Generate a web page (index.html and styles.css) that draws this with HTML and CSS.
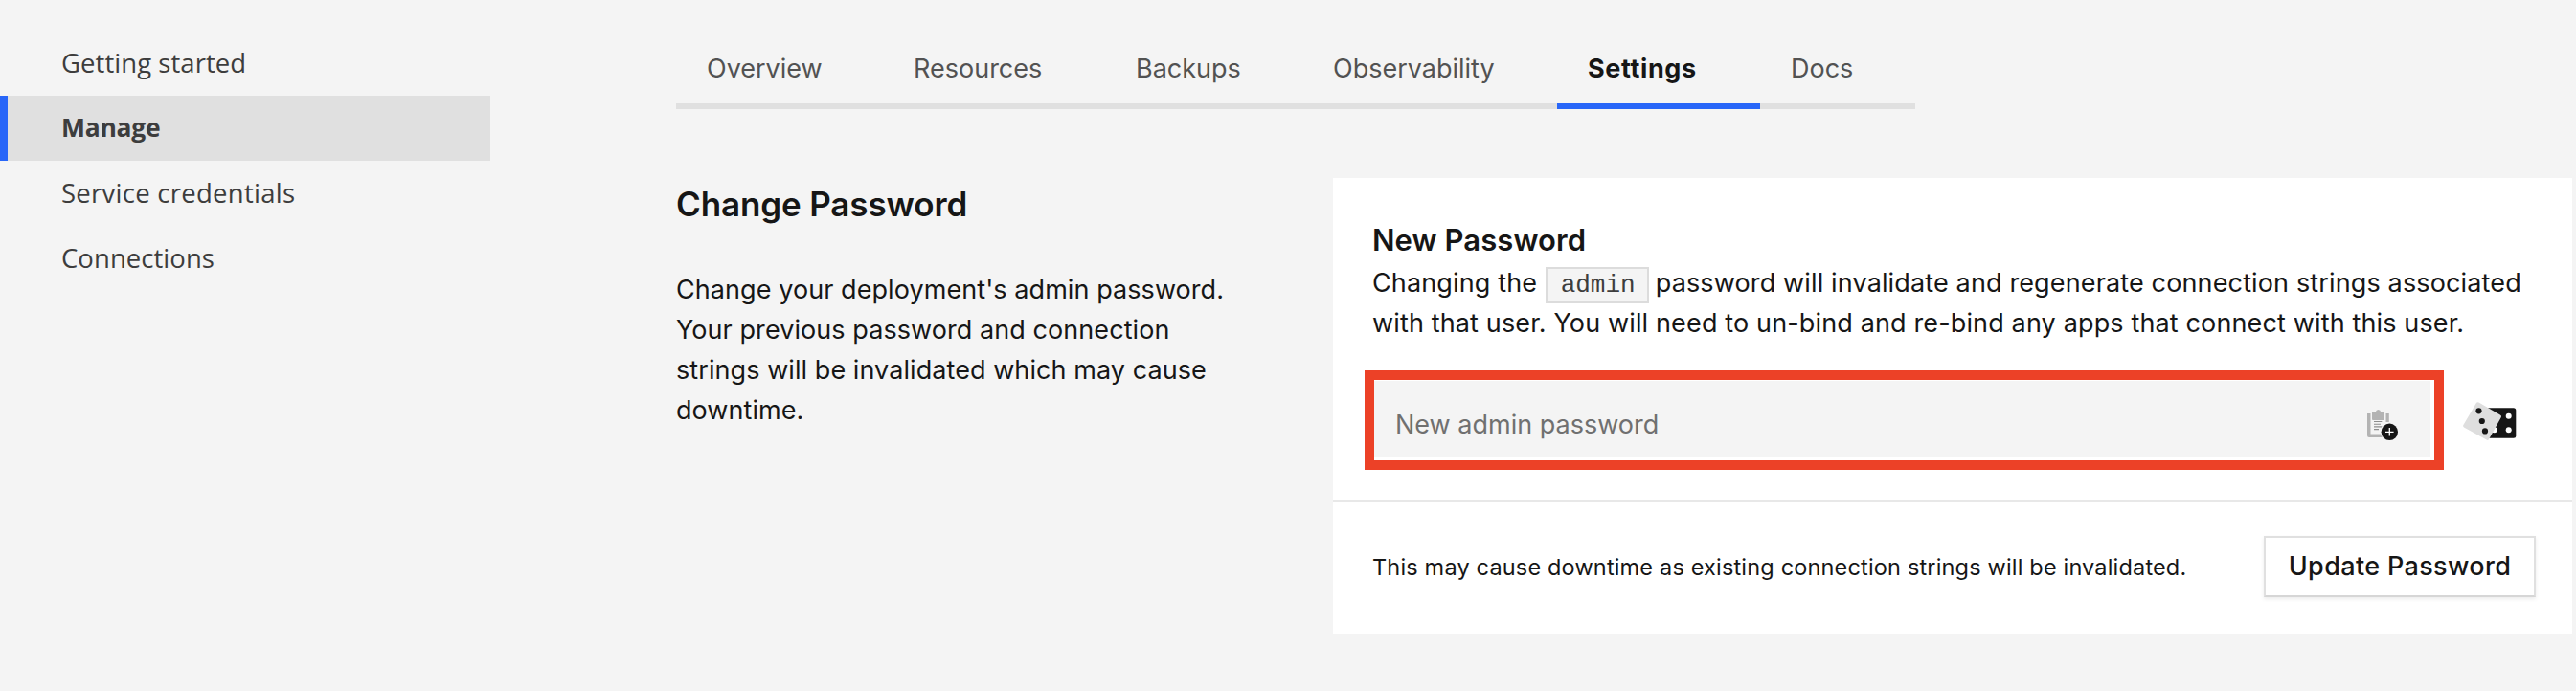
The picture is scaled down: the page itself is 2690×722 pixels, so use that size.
FILE: index.html
```
<!DOCTYPE html>
<html lang="en">
<head>
<meta charset="utf-8">
<title>Settings</title>
<link rel="stylesheet" href="styles.css">
</head>
<body>
<nav class="sidebar">
  <a class="side-link">Getting started</a>
  <a class="side-link side-link-active">Manage</a>
  <a class="side-link side-link-wide">Service credentials</a>
  <a class="side-link">Connections</a>
</nav>
<main class="main">
  <div class="tabs">
    <a class="tab tab-overview">Overview</a>
    <a class="tab tab-resources">Resources</a>
    <a class="tab tab-backups">Backups</a>
    <a class="tab tab-observability">Observability</a>
    <a class="tab tab-settings tab-active">Settings</a>
    <a class="tab tab-docs">Docs</a>
  </div>
  <div class="content">
    <section class="intro">
      <h2 class="intro-title">Change Password</h2>
      <p class="intro-text">Change your deployment's admin password.<br>Your previous password and connection<br>strings will be invalidated which may cause<br>downtime.</p>
    </section>
    <section class="card">
      <div class="card-body">
        <h3 class="card-title">New Password</h3>
        <p class="card-text">Changing the <code class="code">admin</code> password will invalidate and regenerate connection strings associated<br>with that user. You will need to un-bind and re-bind any apps that connect with this user.</p>
        <div class="field-row">
          <div class="highlight">
            <div class="field">
              <span class="placeholder">New admin password</span>
              <svg class="icon-paste" viewBox="0 0 32 32" width="32" height="32" fill="none">
                <path fill="#b3b3b3" d="M0 4h3.500v21.500H19V29H2a2 2 0 0 1-2-2V4zM19.500 4h3.300v9h-3.300z"/>
                <path fill="#b3b3b3" d="M5 3h3.500q.8-3 3-3t3 3H18v7q0 1-1 1H6q-1 0-1-1z"/>
                <path stroke="#8d8d8d" stroke-width="1.100" d="M7 12.500h8.300M7 15.200h7M7 17.900h8.300M7 20.600h5"/>
                <circle cx="23.300" cy="23.300" r="9.500" fill="#f4f4f4"/>
                <circle cx="23.300" cy="23.300" r="8.700" fill="#161616"/>
                <path stroke="#fff" stroke-width="1.300" d="M23.300 19v8.600M19 23.300h8.600"/>
              </svg>
            </div>
          </div>
          <svg class="icon-dice" viewBox="0 0 56 41" width="56" height="41">
            <rect x="24" y="6.300" width="31.300" height="31.400" rx="2.500" fill="#161616"/>
            <g fill="#fff"><circle cx="47.700" cy="14.700" r="3"/><circle cx="47.700" cy="29.300" r="3"/><circle cx="32.700" cy="29.300" r="3"/></g>
            <path d="M16.500 .5 38.800 13.400q1.800 1 .9 2.800L27 39q-.9 1.400-2.400.6L1 26.400q-1.400-.9-.6-2.500L13.800 1.200q1-1.500 2.700-.7z" fill="#dedede"/>
            <g fill="#161616"><circle cx="16.500" cy="9.300" r="3.100"/><circle cx="19.800" cy="20" r="3.100"/><circle cx="23" cy="30.400" r="3.100"/></g>
          </svg>
        </div>
      </div>
      <div class="card-footer">
        <p class="note">This may cause downtime as existing connection strings will be invalidated.</p>
        <button class="button">Update Password</button>
      </div>
    </section>
  </div>
</main>
</body>
</html>
```
FILE: styles.css
```
* { box-sizing: border-box; }
body { margin: 0; display: flex; width: 2690px; height: 722px; overflow: hidden; background: #f4f4f4; color: #161616; font-family: Inter, "Liberation Sans", sans-serif; font-size: 27px; }
h2, h3, p { margin: 0; }
.sidebar { width: 512px; padding-top: 32px; flex: none; font-family: "Open Sans", sans-serif; font-size: 27.500px; letter-spacing: .05px; }
.side-link { display: block; height: 68px; line-height: 67px; padding-left: 64px; color: #3d3d3d; }
.side-link-active { background: #e0e0e0; border-left: 8px solid #2866f8; padding-left: 56px; font-weight: 700; font-size: 26.500px; letter-spacing: -.3px; }
.side-link-wide { letter-spacing: .27px; }
.main { padding-left: 194px; }
.tabs { display: flex; width: 1294px; height: 114px; }
.tab { padding: 54px 0 0 32px; line-height: 36px; color: #525252; border-bottom: 6px solid #e0e0e0; }
.tab-overview { width: 216px; }
.tab-resources { width: 232px; }
.tab-backups { width: 206px; }
.tab-observability { width: 266px; }
.tab-settings { width: 212px; }
.tab-docs { width: 162px; }
.tab-active { border-color: #2866f8; color: #161616; font-weight: 700; letter-spacing: .6px; }
.content { display: grid; grid-template-columns: 686px 1294px; padding-top: 72px; }
.intro-title { font-size: 35px; line-height: 54px; font-weight: 600; letter-spacing: -.13px; }
.intro-text { margin-top: 42px; line-height: 42px; white-space: nowrap; letter-spacing: .07px; }
.card { height: 476px; background: #fff; }
.card-body { height: 338px; padding: 44px 0 0 41px; border-bottom: 2px solid #e8e8e8; }
.card-title { font-size: 31px; line-height: 42px; font-weight: 600; letter-spacing: .08px; }
.card-text { height: 84px; margin-top: 3px; line-height: 42px; white-space: nowrap; letter-spacing: .14px; }
.code { display: inline-block; width: 108px; height: 38px; margin: 0 -.7px 0 .7px; line-height: 34px; padding-left: 14px; border: 2px solid #dcdcdc; background: #f4f4f4; font-family: "Liberation Mono", monospace; font-size: 26px; letter-spacing: 0; color: #3d3d3d; }
.field-row { display: flex; margin: 28px 0 0 -8px; }
.highlight { width: 1127px; height: 104px; border: 10px solid #ec4127; padding: 1px 4px 3px 0; background: #fff; }
.field { display: flex; justify-content: space-between; height: 80px; padding: 0 34px 0 22px; background: #f4f4f4; line-height: 92px; color: #707070; }
.icon-paste { margin-top: 30px; }
.icon-dice { margin: 33px 0 0 20px; }
.card-footer { display: flex; justify-content: space-between; padding: 36px 38px 0 41px; }
.note { font-size: 23.500px; line-height: 66px; letter-spacing: .17px; white-space: nowrap; }
.button { width: 284px; height: 64px; padding: 0; border: 2px solid #e0e0e0; border-bottom-color: #d6d6d6; background: #fff; box-shadow: 0 2px 4px rgba(0,0,0,.08); color: #161616; font: 500 27px/60px Inter, sans-serif; letter-spacing: .35px; }
```
